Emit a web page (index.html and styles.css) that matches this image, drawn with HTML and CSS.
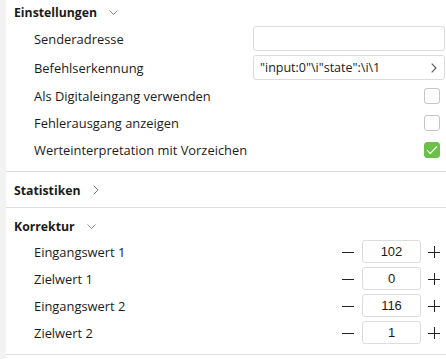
FILE: index.html
```html
<!DOCTYPE html>
<html lang="de">
<head>
<meta charset="utf-8">
<link rel="stylesheet" href="styles.css">
</head>
<body>
<div class="page">
  <div class="strip"></div>
  <div class="panel">
    <section class="section first">
      <div class="head"><span class="title">Einstellungen</span>
        <svg class="chev-down" width="9" height="5" viewBox="0 0 9 5"><path d="M0.5 0.5 L4.5 4.5 L8.5 0.5" fill="none" stroke="#8a8a8a" stroke-width="1"/></svg>
      </div>
      <div class="row input-row">
        <span class="label">Senderadresse</span>
        <div class="textbox"></div>
      </div>
      <div class="row input-row">
        <span class="label">Befehlserkennung</span>
        <div class="textbox"><span class="tb-text">"input:0"\i"state":\i\1</span>
          <svg class="tb-chev" width="6" height="10" viewBox="0 0 6 10"><path d="M0.7 0.7 L5 5 L0.7 9.3" fill="none" stroke="#555" stroke-width="1.1"/></svg>
        </div>
      </div>
      <div class="row check-row">
        <span class="label">Als Digitaleingang verwenden</span>
        <span class="check"></span>
      </div>
      <div class="row check-row">
        <span class="label">Fehlerausgang anzeigen</span>
        <span class="check"></span>
      </div>
      <div class="row check-row">
        <span class="label">Werteinterpretation mit Vorzeichen</span>
        <span class="check on"><svg width="12" height="10" viewBox="0 0 12 10"><path d="M1 5.2 L4.3 8.4 L11 1.4" fill="none" stroke="#fff" stroke-width="1.1"/></svg></span>
      </div>
    </section>
    <section class="section collapsed">
      <div class="head"><span class="title">Statistiken</span>
        <svg class="chev-right" width="6" height="10" viewBox="0 0 6 10"><path d="M0.7 0.7 L5 5 L0.7 9.3" fill="none" stroke="#7a7a7a" stroke-width="1"/></svg>
      </div>
    </section>
    <section class="section numbers">
      <div class="head"><span class="title">Korrektur</span>
        <svg class="chev-down" width="9" height="5" viewBox="0 0 9 5"><path d="M0.5 0.5 L4.5 4.5 L8.5 0.5" fill="none" stroke="#8a8a8a" stroke-width="1"/></svg>
      </div>
      <div class="num-rows">
        <div class="row num-row"><span class="label">Eingangswert 1</span><div class="stepper"><span class="btn"><svg width="12" height="12" viewBox="0 0 12 12"><path d="M0 6.5 H12" stroke="#222" stroke-width="1"/></svg></span><span class="numbox">102</span><span class="btn"><svg width="12" height="12" viewBox="0 0 12 12"><path d="M0 6.5 H12 M6.5 0 V12" stroke="#222" stroke-width="1"/></svg></span></div></div>
        <div class="row num-row"><span class="label">Zielwert 1</span><div class="stepper"><span class="btn"><svg width="12" height="12" viewBox="0 0 12 12"><path d="M0 6.5 H12" stroke="#222" stroke-width="1"/></svg></span><span class="numbox">0</span><span class="btn"><svg width="12" height="12" viewBox="0 0 12 12"><path d="M0 6.5 H12 M6.5 0 V12" stroke="#222" stroke-width="1"/></svg></span></div></div>
        <div class="row num-row"><span class="label">Eingangswert 2</span><div class="stepper"><span class="btn"><svg width="12" height="12" viewBox="0 0 12 12"><path d="M0 6.5 H12" stroke="#222" stroke-width="1"/></svg></span><span class="numbox">116</span><span class="btn"><svg width="12" height="12" viewBox="0 0 12 12"><path d="M0 6.5 H12 M6.5 0 V12" stroke="#222" stroke-width="1"/></svg></span></div></div>
        <div class="row num-row"><span class="label">Zielwert 2</span><div class="stepper"><span class="btn"><svg width="12" height="12" viewBox="0 0 12 12"><path d="M0 6.5 H12" stroke="#222" stroke-width="1"/></svg></span><span class="numbox">1</span><span class="btn"><svg width="12" height="12" viewBox="0 0 12 12"><path d="M0 6.5 H12 M6.5 0 V12" stroke="#222" stroke-width="1"/></svg></span></div></div>
      </div>
    </section>
  </div>
</div>
</body>
</html>
```
FILE: styles.css
```css
html, body {
  margin: 0;
  padding: 0;
  background: #fff;
}
body {
  font-family: "Open Sans", "Noto Sans", sans-serif;
  font-size: 12.9px;
  color: #1b1b1b;
}
.page {
  display: flex;
  width: 446px;
  height: 359px;
  overflow: hidden;
}
.strip {
  width: 6px;
  flex: none;
  background: #f3f3f3;
}
.panel {
  flex: 1;
  display: flex;
  flex-direction: column;
}
.section {
  border-bottom: 1px solid #dedede;
  padding: 6px 0 5px 8px;
}
.section.first {
  padding-top: 0;
  padding-bottom: 8px;
}
.section.numbers {
  padding-bottom: 8px;
}
.head {
  height: 24px;
  display: flex;
  align-items: center;
  gap: 12px;
}
.title {
  font-weight: 700;
  font-size: 12.25px;
}
.row {
  display: flex;
  align-items: center;
  justify-content: space-between;
  padding-left: 20px;
}
.input-row {
  height: 29px;
}
.check-row {
  height: 27px;
  padding-right: 6px;
}
.textbox {
  box-sizing: border-box;
  width: 192px;
  height: 25px;
  border: 1px solid #dcdcdc;
  border-radius: 3px;
  margin-right: 1px;
  display: flex;
  align-items: center;
  justify-content: space-between;
  padding: 0 7px 0 6px;
}
.tb-text {
  font-size: 12.5px;
  color: #1b1b1b;
}
.check {
  width: 16px;
  height: 16px;
  box-sizing: border-box;
  border: 1px solid #c6c6c6;
  border-radius: 3px;
  display: flex;
  align-items: center;
  justify-content: center;
}
.check.on {
  background: #6cc04a;
  border-color: #6cc04a;
}
.num-row {
  height: 27px;
  padding-right: 2px;
}
.stepper {
  display: flex;
  align-items: center;
}
.btn {
  width: 20px;
  height: 23px;
  display: flex;
  align-items: center;
  justify-content: center;
}
.numbox {
  width: 59px;
  height: 23px;
  box-sizing: border-box;
  border: 1px solid #dcdcdc;
  border-radius: 3px;
  display: flex;
  align-items: center;
  justify-content: center;
  margin: 0 3px 0 4px;
  font-family: "Liberation Sans", Arial, sans-serif;
  font-size: 13px;
}
```
